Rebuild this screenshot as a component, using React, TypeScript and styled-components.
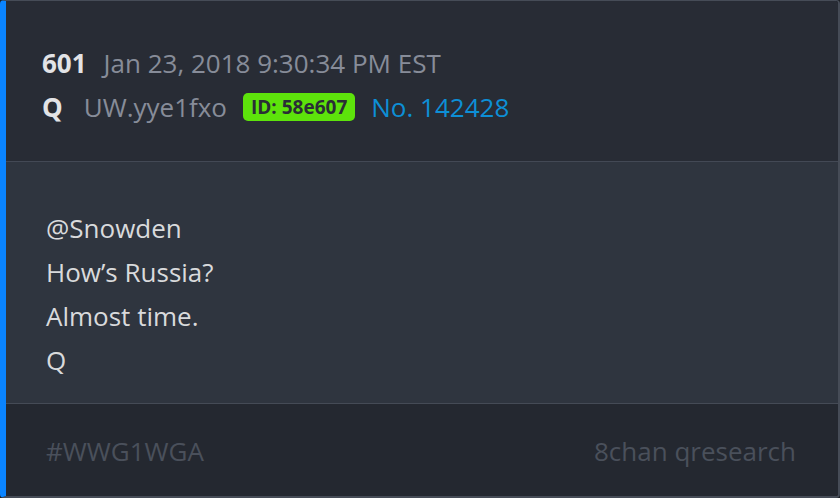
import React from 'react';
import styled, { createGlobalStyle } from 'styled-components';

const GlobalStyle = createGlobalStyle`
  html, body {
    margin: 0;
    padding: 0;
    background: #1b1e24;
  }
  body {
    font-family: "Open Sans", "Noto Sans", sans-serif;
  }
`;

const Card = styled.div`
  width: 840px;
  height: 498px;
  box-sizing: border-box;
  display: flex;
  flex-direction: column;
  border: 1px solid #464c57;
  border-left: 6px solid #0a84ff;
  border-right-width: 2px;
  border-bottom-width: 2px;
  border-radius: 4px;
  overflow: hidden;
`;

const Header = styled.div`
  background: #282c35;
  padding: 40px 40px 33px;
  border-bottom: 1px solid #434955;
  height: 161px;
  box-sizing: border-box;
`;

const MetaRow = styled.div`
  display: flex;
  align-items: center;
  height: 44px;
  font-size: 26px;
`;

const Num = styled.span<{ $space: number }>`
  font-weight: 700;
  color: #e2e3e6;
  margin-right: ${(p) => p.$space}px;
  margin-left: -4px;
`;

const Muted = styled.span`
  color: #878c99;
  margin-right: 16px;
`;

const IdBadge = styled.span`
  background: #5de30b;
  color: #2a2e36;
  font-weight: 700;
  font-size: 19px;
  border-radius: 5px;
  padding: 1px 8px;
  margin-right: 16px;
  line-height: 26px;
`;

const PostNo = styled.span`
  color: #0d8fd6;
`;

const Body = styled.div`
  flex: 1;
  background: #2f353f;
  padding: 44px 40px 19px;
  border-bottom: 1px solid #454b56;
`;

const Line = styled.div`
  font-size: 26px;
  line-height: 44px;
  color: #d9dadc;
`;

const Footer = styled.div`
  display: flex;
  justify-content: space-between;
  align-items: center;
  background: #242830;
  height: 92px;
  padding: 2px 42px 0 40px;
  box-sizing: border-box;
  font-size: 26px;
  color: #4a505b;
`;

export default function App() {
  return (
    <>
      <GlobalStyle />
      <Card>
        <Header>
          <MetaRow>
            <Num $space={17}>601</Num>
            <Muted>Jan 23, 2018 9:30:34 PM EST</Muted>
          </MetaRow>
          <MetaRow>
            <Num $space={21}>Q</Num>
            <Muted>UW.yye1fxo</Muted>
            <IdBadge>ID: 58e607</IdBadge>
            <PostNo>No. 142428</PostNo>
          </MetaRow>
        </Header>
        <Body>
          <Line>@Snowden</Line>
          <Line>How’s Russia?</Line>
          <Line>Almost time.</Line>
          <Line>Q</Line>
        </Body>
        <Footer>
          <span>#WWG1WGA</span>
          <span>8chan qresearch</span>
        </Footer>
      </Card>
    </>
  );
}
